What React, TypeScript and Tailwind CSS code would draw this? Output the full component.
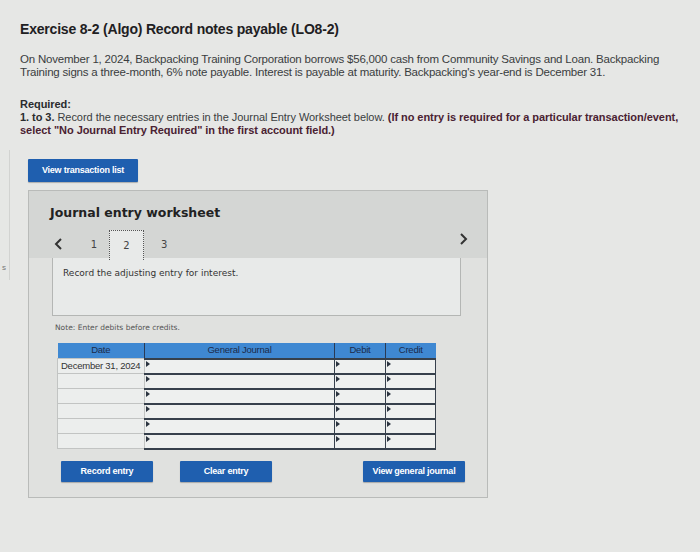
import React from 'react';

const rows = ['December 31, 2024', '', '', '', '', ''];

const Mark = () => (
  <span className="absolute left-[1px] top-[1px] w-0 h-0 border-t-[3px] border-b-[3px] border-l-[4px] border-t-transparent border-b-transparent border-l-[#2b3440]" />
);

const BlueButton = ({ label, className }: { label: string; className: string }) => (
  <button
    className={`h-[21px] bg-[#1f5faf] text-white text-[9px] font-bold tracking-tight rounded-[1px] shadow-[0_1px_1px_rgba(0,0,0,0.25)] ${className}`}
    style={{ fontFamily: '"Liberation Sans", Arial, sans-serif' }}
  >
    {label}
  </button>
);

export default function App() {
  return (
    <div
      className="relative w-[700px] h-[552px] overflow-hidden bg-[#e6e7e5] text-[#2a2c2e]"
      style={{ fontFamily: '"Liberation Sans", Arial, sans-serif' }}
    >
      {/* faint side panel edge */}
      <div className="absolute left-0 top-[150px] w-[10px] h-[130px] border-r border-[#d2d3d1]" />
      <span className="absolute left-[2px] top-[262px] text-[8px] text-[#777]">s</span>

      <div className="pl-[20px] pt-[20px]">
        <h1 className="text-[14px] font-bold tracking-[-0.2px] text-[#1e2022] leading-[18px]">
          Exercise 8-2 (Algo) Record notes payable (LO8-2)
        </h1>

        <div className="mt-[15px] text-[11.5px] leading-[13px] tracking-[-0.2px] text-[#3a3d40]">
          <div>
            On November 1, 2024, Backpacking Training Corporation borrows $56,000 cash from Community Savings and Loan. Backpacking
          </div>
          <div>Training signs a three-month, 6% note payable. Interest is payable at maturity. Backpacking's year-end is December 31.</div>
        </div>

        <div className="mt-[19px] text-[11px] leading-[13px] tracking-[-0.05px]">
          <div className="font-bold text-[#2a2c2e]">Required:</div>
          <div className="text-[#3a3d40]">
            <span className="font-bold text-[#2a2c2e]">1. to 3.</span> Record the necessary entries in the Journal Entry Worksheet below.{' '}
            <span className="font-bold text-[#4a2232]">(If no entry is required for a particular transaction/event,</span>
          </div>
          <div className="font-bold text-[#4a2232]">select "No Journal Entry Required" in the first account field.)</div>
        </div>
      </div>

      <div className="ml-[28px] mt-[19px]">
        <BlueButton label="View transaction list" className="w-[110px] h-[23px]" />
      </div>

      <div className="ml-[28px] mt-[8px] w-[460px] h-[308px] border border-[#b9bbb9] bg-[#e0e1df]">
        <div className="bg-[#d4d6d4] h-[67px] relative">
          <div
            className="pl-[21px] pt-[13px] text-[12.5px] font-bold text-[#222] leading-[17px]"
            style={{ fontFamily: '"DejaVu Sans", Verdana, sans-serif' }}
          >
            Journal entry worksheet
          </div>
          <div
            className="absolute left-0 right-0 top-[38px] h-[30px] flex items-center text-[10px] text-[#444]"
            style={{ fontFamily: '"DejaVu Sans", Verdana, sans-serif' }}
          >
            <svg className="ml-[25px]" width="9" height="12" viewBox="0 0 9 12">
              <path d="M7 1 L2 6 L7 11" fill="none" stroke="#333" strokeWidth="2" />
            </svg>
            <span className="ml-[27px] w-[8px] text-center">1</span>
            <div className="ml-[11px] w-[35px] h-[30px] mt-[1px] bg-[#e8eae9] border-t border-l border-r border-dotted border-[#555] flex items-center justify-center">
              2
            </div>
            <span className="ml-[17px]">3</span>
            <svg className="absolute left-[430px] top-[4px]" width="9" height="12" viewBox="0 0 9 12">
              <path d="M2 1 L7 6 L2 11" fill="none" stroke="#333" strokeWidth="2" />
            </svg>
          </div>
        </div>

        <div
          className="ml-[23px] w-[409px] h-[58px] bg-[#e8eae9] border border-[#b4b6b4] border-t-0 px-[10px] pt-[9px] text-[9px] text-[#333]"
          style={{ fontFamily: '"DejaVu Sans", Verdana, sans-serif' }}
        >
          Record the adjusting entry for interest.
        </div>

        <div
          className="ml-[26px] mt-[6px] text-[7.5px] text-[#555]"
          style={{ fontFamily: '"DejaVu Sans", Verdana, sans-serif' }}
        >
          Note: Enter debits before credits.
        </div>

        <table className="ml-[28px] mt-[9px] border-collapse text-[9.5px] tracking-tight">
          <thead>
            <tr className="h-[16px] bg-[#3f88d2] text-[#1c2b4a]">
              <th className="w-[87px] font-normal border-r border-[#2a3a55]">Date</th>
              <th className="w-[190px] font-normal border-r border-[#2a3a55]">General Journal</th>
              <th className="w-[51px] font-normal border-r border-[#2a3a55]">Debit</th>
              <th className="w-[50px] font-normal">Credit</th>
            </tr>
          </thead>
          <tbody>
            {rows.map((d, i) => (
              <tr key={i} className="h-[15px]">
                <td className="border border-[#c2c4c3] bg-[#eceeed] px-[3px] text-[#333] whitespace-nowrap">{d}</td>
                <td className="relative border-x border-y-2 border-[#36404c] bg-[#eef0ef]">
                  <Mark />
                </td>
                <td className="relative border-x border-y-2 border-[#36404c] bg-[#eef0ef]">
                  <Mark />
                </td>
                <td className="relative border-x border-y-2 border-[#36404c] bg-[#eef0ef]">
                  <Mark />
                </td>
              </tr>
            ))}
          </tbody>
        </table>

        <div className="flex mt-[11px]">
          <BlueButton label="Record entry" className="ml-[32px] w-[92px]" />
          <BlueButton label="Clear entry" className="ml-[27px] w-[92px]" />
          <BlueButton label="View general journal" className="ml-[91px] w-[102px]" />
        </div>
      </div>
    </div>
  );
}
